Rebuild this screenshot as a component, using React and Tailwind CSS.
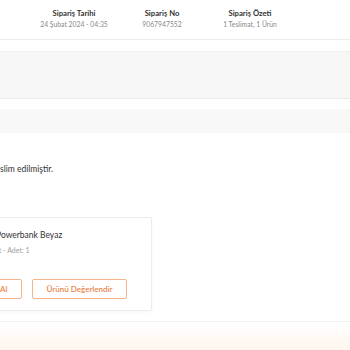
export default function App() {
  return (
    <div className="w-[350px] h-[350px] overflow-hidden bg-white relative" style={{ fontFamily: "Lato, 'Open Sans', sans-serif" }}>
      {/* header */}
      <div className="h-[40px] border-b border-[#ececec] flex pl-[30px]">
        <div className="w-[88px] flex flex-col items-center pt-[8px]">
          <div className="text-[7.7px] font-bold text-[#333] leading-[10px]">Sipariş Tarihi</div>
          <div className="text-[6.8px] text-[#8a8a8a] leading-[10px] mt-[1px]">24 Şubat 2024 - 04:35</div>
        </div>
        <div className="w-[88px] flex flex-col items-center pt-[8px]">
          <div className="text-[7.7px] font-bold text-[#333] leading-[10px]">Sipariş No</div>
          <div className="text-[6.8px] text-[#8a8a8a] leading-[10px] mt-[1px]">9067947552</div>
        </div>
        <div className="w-[88px] flex flex-col items-center pt-[8px]">
          <div className="text-[7.7px] font-bold text-[#333] leading-[10px]">Sipariş Özeti</div>
          <div className="text-[6.8px] text-[#8a8a8a] leading-[10px] mt-[1px]">1 Teslimat, 1 Ürün</div>
        </div>
      </div>
      <div className="h-[11px] bg-white"></div>
      <div className="h-[48px] bg-[#f7f7f7] border-t border-[#f0f0f0] border-b border-b-[#ebebeb]"></div>
      <div className="h-[10px] bg-white"></div>
      <div className="h-[24px] bg-[#f8f8f8]"></div>
      {/* body */}
      <div className="pt-[30px]">
        <div className="text-[8.5px] text-[#333] leading-[12px]">
          slim edilmiştir.
        </div>
      </div>
      <div className="mt-[42px] -ml-[60px] w-[212px] h-[94px] bg-white border border-[#ececec] rounded-[2px] shadow-[0_1px_3px_rgba(0,0,0,0.04)] pt-[11px]">
        <div className="pl-[55px]">
          <div className="text-[8.5px] text-[#333] leading-[12px]">Powerbank Beyaz</div>
        </div>
        <div className="pl-[34px] text-[7px] text-[#a0a0a0] leading-[10px] mt-[4px] whitespace-nowrap">Tek Ebat - Adet: 1</div>
        <div className="flex gap-[10px] mt-[24px] pl-[1px]">
          <div className="w-[80px] h-[20px] shrink-0 border border-[#f4b58d] rounded-[2px] flex items-center justify-center text-[8px] font-semibold text-[#e9844a]">Tekrar Satın Al</div>
          <div className="w-[95px] h-[20px] shrink-0 border border-[#f4b58d] rounded-[2px] flex items-center justify-center text-[8px] font-semibold text-[#e9844a]">Ürünü Değerlendir</div>
        </div>
      </div>
      <div className="absolute left-0 right-0 top-[321px] h-[29px] border-t border-[#f0f0f0] bg-gradient-to-b from-white to-[#fff5ee]"></div>
    </div>
  );
}
